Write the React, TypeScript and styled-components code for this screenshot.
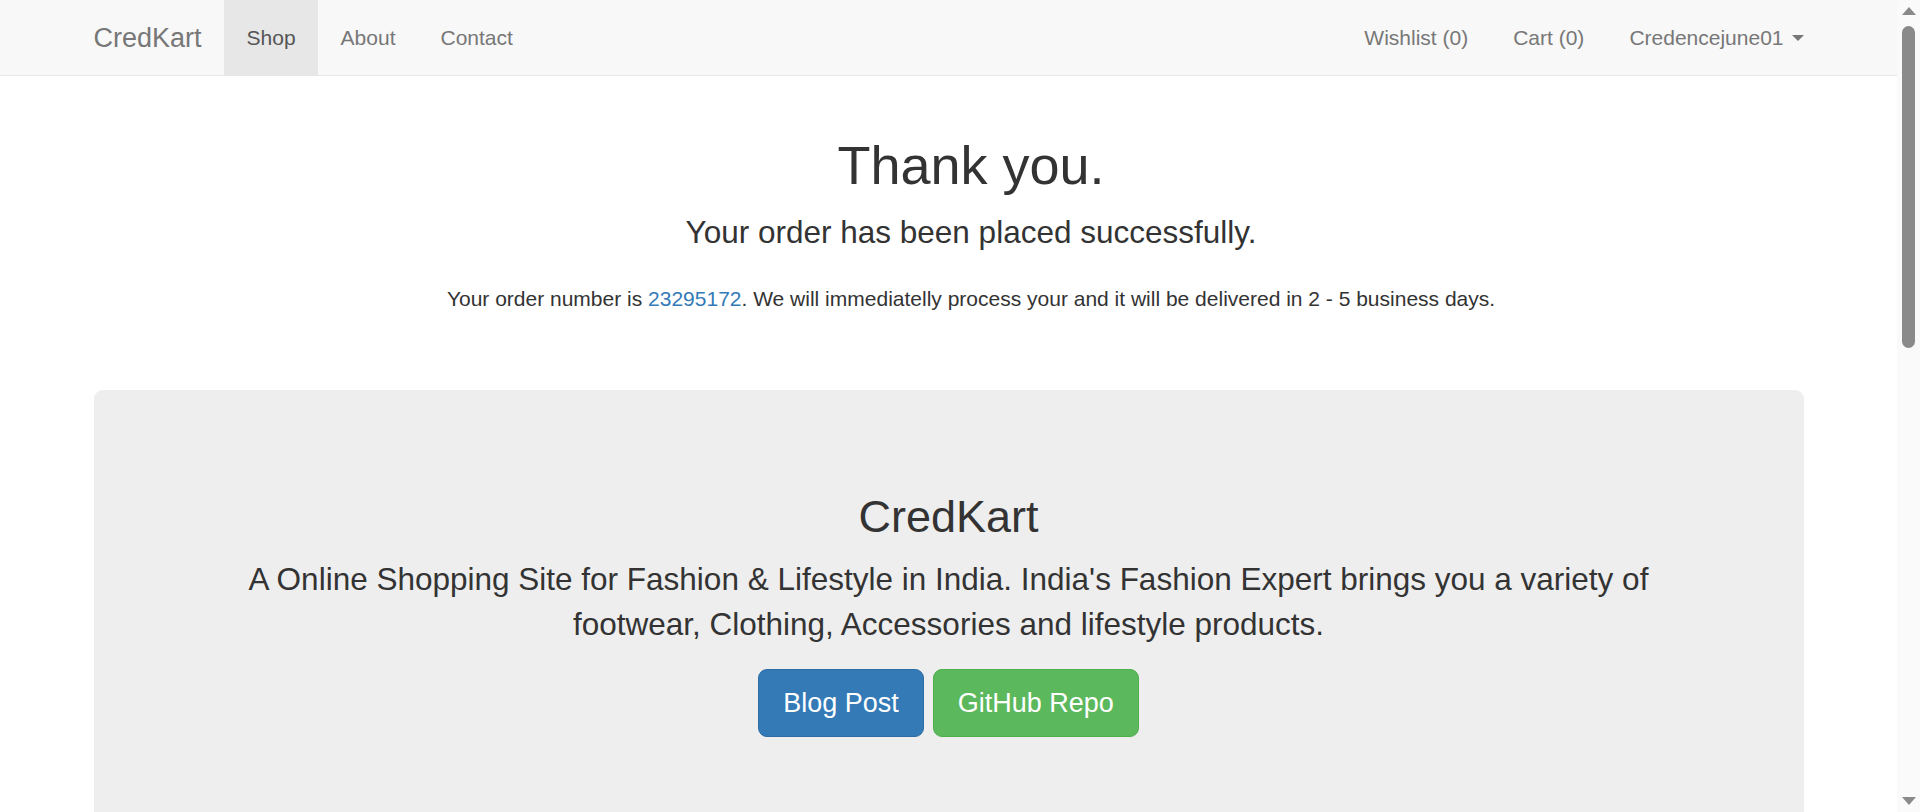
import React from "react";
import styled, { createGlobalStyle } from "styled-components";

// Bootstrap 3 look, drawn at 150% (the reference is a 1.5x zoomed page)
const GlobalStyle = createGlobalStyle`
  html, body {
    margin: 0;
    padding: 0;
  }
  body {
    font-family: "Liberation Sans", Arial, Helvetica, sans-serif;
    font-size: 21px;
    line-height: 1.42857;
    color: #333;
    background: #fff;
    overflow: hidden;
  }
  * {
    box-sizing: border-box;
  }
`;

const Page = styled.div`
  padding-right: 23px;
`;

/* window scrollbar, drawn over the right edge */
const ScrollRail = styled.div`
  position: fixed;
  top: 0;
  right: 0;
  width: 23px;
  height: 100vh;
  background: #fafafa;
  display: flex;
  flex-direction: column;
  align-items: center;
  justify-content: space-between;
`;

const ScrollArrow = styled.span<{ $down?: boolean }>`
  display: block;
  width: 0;
  height: 0;
  margin: ${(p) => (p.$down ? "0 0 7px" : "7px 0 0")};
  border-left: 7.5px solid transparent;
  border-right: 7.5px solid transparent;
  border-bottom: ${(p) => (p.$down ? "0" : "8px solid #8a8a8a")};
  border-top: ${(p) => (p.$down ? "8px solid #8a8a8a" : "0")};
`;

const ScrollThumb = styled.span`
  position: absolute;
  top: 26px;
  left: 5px;
  width: 13px;
  height: 322px;
  border-radius: 7px;
  background: #8a8a8a;
`;

const Container = styled.div`
  width: 1755px;
  margin: 0 auto;
  padding: 0 22.5px;
  display: flow-root;
`;

const Navbar = styled.nav`
  background: #f8f8f8;
  border-bottom: 1px solid #e7e7e7;
  margin-bottom: 30px;
`;

const NavInner = styled(Container)`
  display: flex;
  align-items: stretch;
  height: 75px;
`;

const Brand = styled.a`
  display: block;
  margin-left: -22.5px;
  padding: 22.5px;
  font-size: 27px;
  line-height: 30px;
  color: #777;
  text-decoration: none;
`;

const NavList = styled.ul<{ $right?: boolean }>`
  display: flex;
  list-style: none;
  margin: 0;
  padding: 0;
  margin-left: ${(p) => (p.$right ? "auto" : "0")};
  margin-right: ${(p) => (p.$right ? "-22.5px" : "0")};
`;

const NavLink = styled.a<{ $active?: boolean }>`
  display: flex;
  align-items: center;
  height: 75px;
  padding: 22.5px;
  line-height: 30px;
  color: ${(p) => (p.$active ? "#555" : "#777")};
  background: ${(p) => (p.$active ? "#e7e7e7" : "transparent")};
  text-decoration: none;
`;

const Caret = styled.span`
  display: inline-block;
  width: 0;
  height: 0;
  margin-left: 8px;
  border-top: 6px solid #777;
  border-left: 6px solid transparent;
  border-right: 6px solid transparent;
`;

/* nested container in the original: content sits 22.5px further right */
const Thanks = styled.div`
  padding-left: 45px;
  text-align: center;
`;

const Title = styled.h1`
  font-size: 54px;
  font-weight: 500;
  line-height: 1.1;
  margin: 30px 0 15px;
`;

const Lead = styled.p`
  font-size: 31.5px;
  font-weight: 300;
  line-height: 1.4;
  margin: 0 0 30px;
`;

const OrderNote = styled.p`
  margin: 0 0 15px;
`;

const OrderLink = styled.a`
  color: #337ab7;
  text-decoration: none;
`;

const Jumbotron = styled.div`
  margin-top: 76px;
  margin-bottom: 45px;
  padding: 72px 90px;
  background: #eee;
  border-radius: 9px;
  text-align: center;
`;

const JumboTitle = styled.h2`
  font-size: 45px;
  font-weight: 500;
  line-height: 1.1;
  margin: 30px 0 15px;
`;

const JumboText = styled.p`
  font-size: 31.5px;
  font-weight: 200;
  line-height: 45px;
  margin: 0 0 22.5px;
`;

const ButtonRow = styled.div`
  display: flex;
  justify-content: center;
  gap: 9px;
  margin-bottom: 22.5px;
`;

const Button = styled.a<{ $variant: "primary" | "success" }>`
  display: inline-block;
  padding: 15px 24px;
  font-size: 27px;
  line-height: 36px;
  border-radius: 9px;
  color: #fff;
  text-decoration: none;
  background: ${(p) => (p.$variant === "primary" ? "#337ab7" : "#5cb85c")};
  border: 1px solid ${(p) => (p.$variant === "primary" ? "#2e6da4" : "#4cae4c")};
`;

export default function App() {
  return (
    <Page>
      <GlobalStyle />
      <Navbar>
        <NavInner>
          <Brand href="#">CredKart</Brand>
          <NavList>
            <li><NavLink href="#" $active>Shop</NavLink></li>
            <li><NavLink href="#">About</NavLink></li>
            <li><NavLink href="#">Contact</NavLink></li>
          </NavList>
          <NavList $right>
            <li><NavLink href="#">Wishlist (0)</NavLink></li>
            <li><NavLink href="#">Cart (0)</NavLink></li>
            <li>
              <NavLink href="#">
                Credencejune01 <Caret />
              </NavLink>
            </li>
          </NavList>
        </NavInner>
      </Navbar>

      <Container>
        <Thanks>
          <Title>Thank you.</Title>
          <Lead>Your order has been placed successfully.</Lead>
          <OrderNote>
            Your order number is <OrderLink href="#">23295172</OrderLink>. We will immediatelly process your and it will be delivered in 2 - 5 business days.
          </OrderNote>
        </Thanks>

        <Jumbotron>
          <JumboTitle>CredKart</JumboTitle>
          <JumboText>
            A Online Shopping Site for Fashion &amp; Lifestyle in India. India's Fashion Expert brings you a variety of footwear, Clothing, Accessories and lifestyle products.
          </JumboText>
          <ButtonRow>
            <Button href="#" $variant="primary">Blog Post</Button>
            <Button href="#" $variant="success">GitHub Repo</Button>
          </ButtonRow>
        </Jumbotron>
      </Container>

      <ScrollRail>
        <ScrollArrow />
        <ScrollThumb />
        <ScrollArrow $down />
      </ScrollRail>
    </Page>
  );
}
